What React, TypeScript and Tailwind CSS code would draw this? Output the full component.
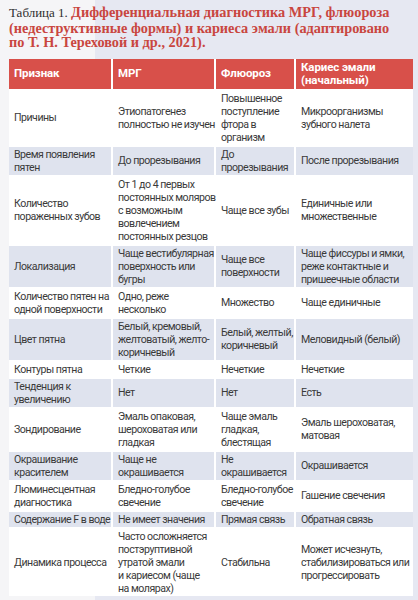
const rows: { cells: string[][]; shaded: boolean }[] = [
  {
    shaded: false,
    cells: [
      ['Причины'],
      ['Этиопатогенез', 'полностью не изучен'],
      ['Повышенное', 'поступление', 'фтора в', 'организм'],
      ['Микроорганизмы', 'зубного налета'],
    ],
  },
  {
    shaded: true,
    cells: [['Время появления', 'пятен'], ['До прорезывания'], ['До', 'прорезывания'], ['После прорезывания']],
  },
  {
    shaded: false,
    cells: [
      ['Количество', 'пораженных зубов'],
      ['От 1 до 4 первых', 'постоянных моляров', 'с возможным', 'вовлечением', 'постоянных резцов'],
      ['Чаще все зубы'],
      ['Единичные или', 'множественные'],
    ],
  },
  {
    shaded: true,
    cells: [
      ['Локализация'],
      ['Чаще вестибулярная', 'поверхность или', 'бугры'],
      ['Чаще все', 'поверхности'],
      ['Чаще фиссуры и ямки,', 'реже контактные и', 'пришеечные области'],
    ],
  },
  {
    shaded: false,
    cells: [['Количество пятен на', 'одной поверхности'], ['Одно, реже', 'несколько'], ['Множество'], ['Чаще единичные']],
  },
  {
    shaded: true,
    cells: [
      ['Цвет пятна'],
      ['Белый, кремовый,', 'желтоватый, желто-', 'коричневый'],
      ['Белый, желтый,', 'коричневый'],
      ['Меловидный (белый)'],
    ],
  },
  {
    shaded: false,
    cells: [['Контуры пятна'], ['Четкие'], ['Нечеткие'], ['Нечеткие']],
  },
  {
    shaded: true,
    cells: [['Тенденция к', 'увеличению'], ['Нет'], ['Нет'], ['Есть']],
  },
  {
    shaded: false,
    cells: [
      ['Зондирование'],
      ['Эмаль опаковая,', 'шероховатая или', 'гладкая'],
      ['Чаще эмаль', 'гладкая,', 'блестящая'],
      ['Эмаль шероховатая,', 'матовая'],
    ],
  },
  {
    shaded: true,
    cells: [['Окрашивание', 'красителем'], ['Чаще не', 'окрашивается'], ['Не', 'окрашивается'], ['Окрашивается']],
  },
  {
    shaded: false,
    cells: [
      ['Люминесцентная', 'диагностика'],
      ['Бледно-голубое', 'свечение'],
      ['Бледно-голубое', 'свечение'],
      ['Гашение свечения'],
    ],
  },
  {
    shaded: true,
    cells: [['Содержание F в воде'], ['Не имеет значения'], ['Прямая связь'], ['Обратная связь']],
  },
  {
    shaded: false,
    cells: [
      ['Динамика процесса'],
      ['Часто осложняется', 'постэруптивной', 'утратой эмали', 'и кариесом (чаще', 'на молярах)'],
      ['Стабильна'],
      ['Может исчезнуть,', 'стабилизироваться или', 'прогрессировать'],
    ],
  },
];

const headers = [['Признак'], ['МРГ'], ['Флюороз'], ['Кариес эмали', '(начальный)']];

function Lines({ lines }: { lines: string[] }) {
  return (
    <>
      {lines.map((l, i) => (
        <span key={i} className="block whitespace-nowrap">
          {l}
        </span>
      ))}
    </>
  );
}

export default function App() {
  return (
    <div className="h-[600px] w-[418px] overflow-hidden bg-[linear-gradient(to_right,#f5f5f7_95px,#e6e8f2_95px)] font-['Roboto',sans-serif]">
      <div className="px-[9px] pt-[5px] font-['Liberation_Serif',serif] text-[14.3px] leading-[14.5px]">
        <span className="text-[13px] text-[#2e2e2e]">Таблица 1. </span>
        <span className="font-bold text-[#c9463f]">
          Дифференциальная диагностика МРГ, флюороза
          <br />
          (недеструктивные формы) и кариеса эмали (адаптировано
          <br />
          по Т. Н. Тереховой и др., 2021).
        </span>
      </div>

      <div className="ml-[9px] mt-[9px] grid w-[404px] grid-cols-[102px_101px_78px_117px] gap-[2px] bg-white">
        {headers.map((h, i) => (
          <div
            key={i}
            className="flex h-[30px] flex-col justify-center bg-[#d8504a] pl-[5px] text-[11.5px] font-bold leading-[13px] tracking-[-0.1px] text-white"
          >
            <Lines lines={h} />
          </div>
        ))}
        {rows.map((row, r) =>
          row.cells.map((cell, c) => (
            <div
              key={`${r}-${c}`}
              className={`flex flex-col justify-center py-px pl-[5px] text-[10.6px] leading-[13px] tracking-[-0.5px] text-[#3a3a3a] ${
                row.shaded ? 'bg-[#dfe3ee]' : 'bg-white'
              }`}
            >
              <Lines lines={cell} />
            </div>
          ))
        )}
      </div>
    </div>
  );
}
